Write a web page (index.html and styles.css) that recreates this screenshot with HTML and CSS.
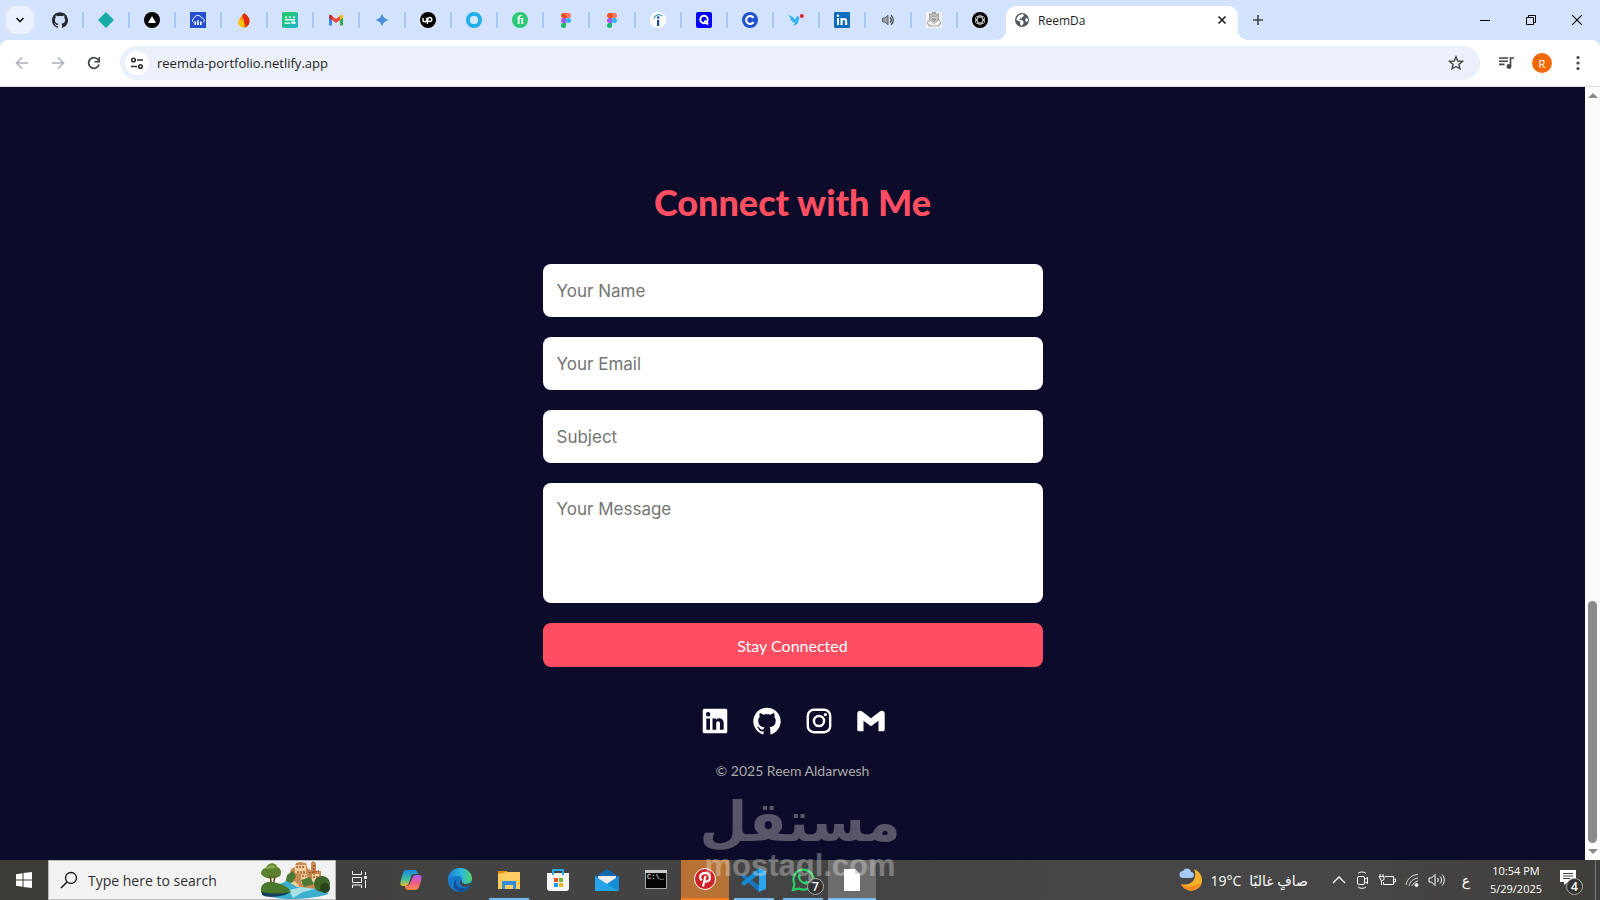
FILE: index.html
```html
<!DOCTYPE html>
<html lang="en">
<head>
    <meta charset="UTF-8">
    <meta name="viewport" content="width=device-width, initial-scale=1.0">
    <title>ReemDa</title>
    <link rel="stylesheet" href="styles.css">
</head>
<body>
    <!-- Tab strip -->
    <header class="tab-strip">
        <button class="tab-search" aria-label="Search tabs">
            <svg width="10" height="10" viewBox="0 0 10 10"><path d="M1.5 3 5 6.5 8.5 3" fill="none" stroke="#1f1f1f" stroke-width="1.700"/></svg>
        </button>
        <nav class="tabs">
            <button class="tab" aria-label="GitHub"><svg viewBox="0 0 24 24"><path fill="#24292f" d="M12 .297c-6.63 0-12 5.373-12 12 0 5.303 3.438 9.8 8.205 11.385.6.113.82-.258.82-.577 0-.285-.01-1.04-.015-2.04-3.338.724-4.042-1.61-4.042-1.61C4.422 18.07 3.633 17.7 3.633 17.7c-1.087-.744.084-.729.084-.729 1.205.084 1.838 1.236 1.838 1.236 1.07 1.835 2.809 1.305 3.495.998.108-.776.417-1.305.76-1.605-2.665-.3-5.466-1.332-5.466-5.93 0-1.31.465-2.38 1.235-3.22-.135-.303-.54-1.523.105-3.176 0 0 1.005-.322 3.3 1.23.96-.267 1.98-.399 3-.405 1.02.006 2.04.138 3 .405 2.28-1.552 3.285-1.23 3.285-1.23.645 1.653.24 2.873.12 3.176.765.84 1.23 1.91 1.23 3.22 0 4.61-2.805 5.625-5.475 5.92.42.36.81 1.096.81 2.22 0 1.606-.015 2.896-.015 3.286 0 .315.21.69.825.57C20.565 22.092 24 17.592 24 12.297c0-6.627-5.373-12-12-12"/></svg></button>
            <button class="tab" aria-label="Netlify"><svg viewBox="0 0 16 16"><path fill="#15ada7" d="M8 0l8 8-8 8-8-8z"/><path d="M4 7l8 3M7 3l4 9M5 11l7-5" stroke="#1a8f96" stroke-width=".6" stroke-dasharray="1 1"/></svg></button>
            <button class="tab" aria-label="Vercel"><svg viewBox="0 0 16 16"><circle cx="8" cy="8" r="8"/><path fill="#fff" d="M8 4l4 7H4z"/></svg></button>
            <button class="tab" aria-label="Cloudinary"><svg viewBox="0 0 16 16"><path fill="#2450d0" d="M0 0h16v16H0z"/><path d="M3.500 10.500A2.300 2.300 0 0 1 3.800 6.500C5 2.500 10.500 2.500 11.800 6.200 14.500 6.200 15 9.500 12.800 10.500" fill="none" stroke="#fff"/><path fill="#fff" d="M4.500 9.500h1.600V13H4.500zM7.200 8.300h1.600V13H7.200zM10 9.500h1.600V13H10z"/></svg></button>
            <button class="tab" aria-label="Firebase"><svg viewBox="0 0 16 16"><path fill="#dd2c00" d="M8 1c4 3 6 5 5.500 9A5.600 5.600 0 0 1 8 15.500z"/><path fill="#ff9100" d="M8 1C6 4 3 6 2.500 10A5.600 5.600 0 0 0 8 15.500c2-2 0-6-1-8 0-2 1-3 1-6.500z"/><path fill="#ffc400" d="M3.500 7c3 1 5 4 5 8.300C5 16 2 13 2.500 10z"/><path fill="#dd2c00" d="M7 1.500c-1 3-.5 5 1.500 7l2-3z"/></svg></button>
            <button class="tab" aria-label="Messages"><svg viewBox="0 0 16 16"><defs><linearGradient id="mint" x1="0" y1="0" x2="1" y2="1"><stop offset=".3" stop-color="#22c973"/><stop offset="1" stop-color="#1bb0dc"/></linearGradient></defs><rect width="16" height="16" rx="2" fill="url(#mint)"/><path fill="#fff" d="M3 4.500h2V6H3zM7 4.500h2V6H7zM11 4.500h2V6h-2zM3 7h10v1.500H3zM2.500 10.500h6v1.300h-6zM9.500 9.500h4v2.300h-4z"/></svg></button>
            <button class="tab" aria-label="Gmail"><svg viewBox="0 0 16 16"><path fill="#4285f4" d="M1 5v8.500h3V7z"/><path fill="#34a853" d="M12 7v6.500h3V5z"/><path fill="#ea4335" d="M4 4l4 3 4-3v4l-4 3-4-3z"/><path fill="#c5221f" d="M1 4.500C1 2.500 3 2 4 3.500V8L1 5.800z"/><path fill="#fbbc04" d="M15 4.500C15 2.500 13 2 12 3.500V8l3-2.200z"/></svg></button>
            <button class="tab" aria-label="Gemini"><svg viewBox="0 0 16 16"><path fill="#4a8ddb" d="M8 1.500c1 3.700 2.800 5.500 6.500 6.500-3.700 1-5.500 2.800-6.500 6.500C7 10.800 5.200 9 1.500 8 5.200 7 7 5.200 8 1.500z"/></svg></button>
            <button class="tab" aria-label="Upwork"><svg viewBox="0 0 16 16"><circle cx="8" cy="8" r="8"/><path d="M3 6v2a1.800 1.800 0 0 0 3.600 0V6c.6 2 1.600 3.500 3.200 3.500a2 2 0 1 0-2-2L7.300 12" fill="none" stroke="#fff" stroke-width="1.400"/></svg></button>
            <button class="tab" aria-label="Ring"><svg viewBox="0 0 16 16"><circle cx="8" cy="8" r="6" fill="none" stroke="#22aee8" stroke-width="4"/><circle cx="8" cy="8" r="4" fill="#cfeafd"/></svg></button>
            <button class="tab" aria-label="Fiverr"><svg viewBox="0 0 16 16"><circle cx="8" cy="8" r="8" fill="#2bc878"/><text x="8" y="12" class="icon-letter" text-anchor="middle" font-size="11">fi</text></svg></button>
            <button class="tab" aria-label="Figma"><svg viewBox="0 0 16 16"><path fill="#f24e1e" d="M8 1H5.500a2.500 2.500 0 0 0 0 5H8z"/><path fill="#ff7262" d="M8 1h2.500a2.500 2.500 0 0 1 0 5H8z"/><path fill="#a259ff" d="M8 6H5.500a2.500 2.500 0 0 0 0 5H8z"/><circle cx="10.500" cy="8.500" r="2.500" fill="#28b8f5"/><path fill="#18b56b" d="M8 11H5.500A2.500 2.500 0 1 0 8 13.500z"/></svg></button>
            <button class="tab" aria-label="Figma file"><svg viewBox="0 0 16 16"><path fill="#f24e1e" d="M8 1H5.500a2.500 2.500 0 0 0 0 5H8z"/><path fill="#ff7262" d="M8 1h2.500a2.500 2.500 0 0 1 0 5H8z"/><path fill="#a259ff" d="M8 6H5.500a2.500 2.500 0 0 0 0 5H8z"/><circle cx="10.500" cy="8.500" r="2.500" fill="#28b8f5"/><path fill="#18b56b" d="M8 11H5.500A2.500 2.500 0 1 0 8 13.500z"/></svg></button>
            <button class="tab" aria-label="Indeed"><svg viewBox="0 0 16 16"><circle cx="8" cy="8" r="8" fill="#fff"/><path fill="#1c4a99" d="M7 8h2.200v6H7z"/><circle cx="8.200" cy="5.500" r="1.300" fill="#1c4a99"/><path d="M4 6.500C5 2.500 9 1.500 12 4" fill="none" stroke="#4d9ab8" stroke-width="1.200"/></svg></button>
            <button class="tab" aria-label="Q"><svg viewBox="0 0 16 16"><rect width="16" height="16" rx="2" fill="#0000fa"/><circle cx="8" cy="7.500" r="3.700" fill="none" stroke="#fff" stroke-width="2"/><path d="M8.500 8.500l3.500 4" stroke="#fff" stroke-width="2"/></svg></button>
            <button class="tab" aria-label="Coursera"><svg viewBox="0 0 16 16"><circle cx="8" cy="8" r="8" fill="#1f53cc"/><path d="M11.500 5.800a4 4 0 1 0 0 4.400" fill="none" stroke="#fff" stroke-width="2.200"/></svg></button>
            <button class="tab" aria-label="Bird"><svg viewBox="0 0 16 16"><path fill="#2fb4ee" d="M0 3l5 2 2 2.500L9 4l2.500 1-1 4c-.5 3-2.500 4-5.500 5l2-3C4 10 2.500 8 2.500 6z"/><circle cx="13.800" cy="4" r="2" fill="#e3242b"/></svg></button>
            <button class="tab" aria-label="LinkedIn"><svg viewBox="0 0 16 16"><rect width="16" height="16" rx="1" fill="#0b6cc0"/><path fill="#fff" d="M3 6h2v7H3zM6.500 6h2v1c1-1.500 4.700-1.500 4.700 2v4h-2.100V9.500c0-2.300-2.500-2-2.500 0V13h-2.100z"/><circle cx="4" cy="3.800" r="1.200" fill="#fff"/></svg></button>
            <button class="tab" aria-label="Audio playing"><svg viewBox="0 0 16 16"><path d="M2.500 6v4h2.300L8 12.800V3.200L4.800 6z" fill="#9aa0a6" stroke="#5f6368"/><path d="M10 5.500c1.500 1.500 1.500 3.500 0 5M11 3.200c3 2.800 3 6.800 0 9.600" fill="none" stroke="#444746" stroke-width="1.300"/></svg></button>
            <button class="tab" aria-label="University"><svg viewBox="0 0 16 16"><path fill="#f2f2f2" d="M0 0h16v16H0z"/><path fill="#a3a3a3" d="M3 1l3 1V0h4v2l3-1v7l-5 4-5-4z"/><path d="M5 3v5l3 3 3-3V3M6 3h4M6 5.500h4" fill="none" stroke="#d8d8d8"/><path d="M1 11l4 3h6l4-3M3 8l-2 3 3 4M13 8l2 3-3 4" fill="none" stroke="#aaa"/></svg></button>
            <button class="tab" aria-label="ChatGPT"><svg viewBox="0 0 16 16"><circle cx="8" cy="8" r="8"/><g fill="none" stroke="#ddd" stroke-width=".8"><ellipse cx="8" cy="8" rx="2.700" ry="5"/><ellipse cx="8" cy="8" rx="2.700" ry="5" transform="rotate(60 8 8)"/><ellipse cx="8" cy="8" rx="2.700" ry="5" transform="rotate(120 8 8)"/></g></svg></button>
        </nav>
        <div class="active-tab">
            <svg width="16" height="16" viewBox="0 0 16 16"><circle cx="8" cy="8" r="7" fill="#55585c"/><path fill="#fff" d="M6.500 2.600L9 2l1 2-2 1v1.500H6L5 8h3l1.500 1.500v2L7.500 14 6 12l.5-2L2.500 8c0-2 1.500-4.500 4-5.400zM12 6l2 1v2l-1.500 1L11 8.500z"/></svg>
            <span class="active-title">ReemDa</span>
            <button class="icon-btn" aria-label="Close tab"><svg width="10" height="10" viewBox="0 0 10 10"><path d="M1.500 1.500l7 7M8.500 1.500l-7 7" stroke="#1f1f1f" stroke-width="1.600"/></svg></button>
        </div>
        <button class="new-tab" aria-label="New tab"><svg width="12" height="12" viewBox="0 0 12 12"><path d="M6 1v10M1 6h10" stroke="#444746" stroke-width="1.600"/></svg></button>
        <div class="window-controls">
            <button aria-label="Minimize"><svg width="10" height="10" viewBox="0 0 10 10"><path d="M0 5.500h10" stroke="#000"/></svg></button>
            <button aria-label="Restore"><svg width="10" height="10" viewBox="0 0 10 10"><path d="M.5 2.500h7v7h-7zM2.500 2.500v-2h7v7h-2" fill="none" stroke="#000"/></svg></button>
            <button aria-label="Close"><svg width="10" height="10" viewBox="0 0 10 10"><path d="M0 0l10 10M10 0L0 10" stroke="#000" stroke-width="1.100"/></svg></button>
        </div>
    </header>

    <!-- Toolbar -->
    <div class="toolbar-wrap">
        <div class="toolbar">
            <div class="nav-buttons">
                <button class="icon-btn" aria-label="Back" disabled><svg width="14" height="14" viewBox="0 0 14 14"><path d="M13 7H2M7 1.500L1.500 7 7 12.500" fill="none" stroke="#b0b3b8" stroke-width="1.600"/></svg></button>
                <button class="icon-btn" aria-label="Forward" disabled><svg width="14" height="14" viewBox="0 0 14 14"><path d="M1 7h11M7 1.500L12.500 7 7 12.500" fill="none" stroke="#b0b3b8" stroke-width="1.600"/></svg></button>
                <button class="icon-btn" aria-label="Reload"><svg width="14" height="14" viewBox="0 0 14 14"><path d="M12 8.500A5.300 5.300 0 1 1 11.500 4.300" fill="none" stroke="#3c4043" stroke-width="1.700"/><path fill="#3c4043" d="M13 1v5.500H7.500V5h4V1z"/></svg></button>
            </div>
            <div class="address-bar">
                <button class="site-info" aria-label="View site information"><svg width="14" height="14" viewBox="0 0 14 14" fill="none" stroke="#303134" stroke-width="1.600"><circle cx="3.500" cy="4" r="1.800"/><path d="M7 4h6M1 10.500h6"/><circle cx="10.500" cy="10.500" r="1.800"/></svg></button>
                <input class="url" type="text" value="reemda-portfolio.netlify.app" aria-label="Address">
                <button class="icon-btn" aria-label="Bookmark this tab"><svg width="16" height="16" viewBox="0 0 16 16"><path d="M8 1.800l1.800 4.200 4.700.4-3.600 3 1.100 4.500L8 11.500l-4 2.400 1.100-4.500-3.600-3 4.700-.4z" fill="none" stroke="#444746" stroke-width="1.400"/></svg></button>
            </div>
            <div class="toolbar-actions">
                <button class="icon-btn" aria-label="Media controls"><svg width="16" height="14" viewBox="0 0 16 14"><path d="M1 2h9M1 5.200h9M1 8.400h5.500" stroke="#444746" stroke-width="1.600"/><path d="M12.500 10V2H16" fill="none" stroke="#444746" stroke-width="1.700"/><circle cx="11" cy="10.500" r="2.400" fill="#444746"/></svg></button>
                <button class="avatar" aria-label="Profile">R</button>
                <button class="icon-btn" aria-label="Menu"><svg width="4" height="16" viewBox="0 0 4 16" fill="#444746"><circle cx="2" cy="2.500" r="1.600"/><circle cx="2" cy="8" r="1.600"/><circle cx="2" cy="13.500" r="1.600"/></svg></button>
            </div>
        </div>
    </div>

    <!-- Page -->
    <div class="viewport">
        <main class="contact">
            <h2>Connect with Me</h2>
            <form class="contact-form">
                <input type="text" placeholder="Your Name" aria-label="Your Name">
                <input type="email" placeholder="Your Email" aria-label="Your Email">
                <input type="text" placeholder="Subject" aria-label="Subject">
                <textarea placeholder="Your Message" aria-label="Your Message"></textarea>
                <button type="button">Stay Connected</button>
            </form>
            <div class="social">
                <a href="#" aria-label="LinkedIn"><svg viewBox="0 0 24 24"><path d="M20 2.800a1.200 1.200 0 0 1 1.200 1.200v16a1.200 1.200 0 0 1-1.200 1.200H4A1.200 1.200 0 0 1 2.800 20V4A1.200 1.200 0 0 1 4 2.800h16m-1.500 15.700v-5.300a3.260 3.260 0 0 0-3.260-3.260c-.85 0-1.840.52-2.320 1.300v-1.110h-2.790v8.370h2.790v-4.930c0-.77.62-1.400 1.390-1.400a1.400 1.400 0 0 1 1.400 1.400v4.930h2.790M6.880 8.560a1.680 1.680 0 0 0 1.680-1.680c0-.93-.75-1.690-1.680-1.690a1.690 1.690 0 0 0-1.690 1.690c0 .93.76 1.680 1.690 1.680m1.390 9.940v-8.370H5.500v8.370h2.770z"/></svg></a>
                <a href="#" aria-label="GitHub"><svg viewBox="-2 -2 28 28"><path d="M12 .297c-6.63 0-12 5.373-12 12 0 5.303 3.438 9.800 8.205 11.385.6.113.82-.258.82-.577 0-.285-.01-1.040-.015-2.040-3.338.724-4.042-1.610-4.042-1.610C4.422 18.070 3.633 17.700 3.633 17.700c-1.087-.744.084-.729.084-.729 1.205.084 1.838 1.236 1.838 1.236 1.070 1.835 2.809 1.305 3.495.998.108-.776.417-1.305.76-1.605-2.665-.3-5.466-1.332-5.466-5.930 0-1.310.465-2.380 1.235-3.220-.135-.303-.54-1.523.105-3.176 0 0 1.005-.322 3.300 1.230.96-.267 1.980-.399 3-.405 1.020.006 2.040.138 3 .405 2.280-1.552 3.285-1.230 3.285-1.230.645 1.653.24 2.873.12 3.176.765.84 1.230 1.910 1.230 3.220 0 4.610-2.805 5.625-5.475 5.920.42.36.81 1.096.81 2.220 0 1.606-.015 2.896-.015 3.286 0 .315.21.69.825.57C20.565 22.092 24 17.592 24 12.297c0-6.627-5.373-12-12-12"/></svg></a>
                <a href="#" aria-label="Instagram"><svg viewBox="0 0 24 24" fill="none"><rect x="3.600" y="3.600" width="16.800" height="16.800" rx="4.500" fill="none" stroke="#fff" stroke-width="1.800"/><circle cx="12" cy="12" r="3.800" fill="none" stroke="#fff" stroke-width="1.800"/><circle cx="16.800" cy="7.200" r="1.200"/></svg></a>
                <a href="#" aria-label="Gmail"><svg viewBox="-2 -2 28 28"><path d="M24 5.457v13.909c0 .904-.732 1.636-1.636 1.636h-3.819V11.730L12 16.640l-6.545-4.910v9.273H1.636A1.636 1.636 0 0 1 0 19.366V5.457c0-2.023 2.309-3.178 3.927-1.964L5.455 4.640 12 9.548l6.545-4.910 1.528-1.145C21.690 2.280 24 3.434 24 5.457z"/></svg></a>
            </div>
            <p class="copyright">© 2025 Reem Aldarwesh</p>
        </main>
        <div class="scrollbar">
            <span class="arrow-up"></span>
            <span class="track"></span>
            <span class="thumb"></span>
            <span class="arrow-down"></span>
        </div>
    </div>

    <!-- Taskbar -->
    <footer class="taskbar">
        <button class="start" aria-label="Start"><svg width="16" height="16" viewBox="0 0 16 16"><path fill="#fff" d="M0 2.200L6.500 1.300V7.500H0zM7.500 1.100L16 0v7.500H7.500zM0 8.500h6.500v6.200L0 13.800zM7.500 8.500H16V16l-8.500-1.100z"/></svg></button>
        <div class="search">
            <svg width="18" height="18" viewBox="0 0 18 18"><circle cx="11" cy="7" r="5.500" fill="none" stroke="#111" stroke-width="1.300"/><path d="M7 11l-6 6" stroke="#111" stroke-width="1.400"/></svg>
            <input type="text" placeholder="Type here to search" aria-label="Search">
            <svg width="70" height="38" viewBox="0 0 70 38">
                <path fill="#c98b52" d="M22 25l6-10 2-7 4-2 1-4 4-1 6 1 2 6 3 1V2l2-2 3 2v8h5v12l8 6-15 3z"/>
                <path fill="#f0cf9a" d="M34 4h11v8H34zM40 13h6v9h-6zM51 13h7v9h-7zM24 24l9-4 6 5-10 4z"/>
                <path d="M35 6h9M36 11h8M48 12l10-2M53 4v10M52 16h5M41 15h4" stroke="#a35331" stroke-width="1.500" stroke-dasharray="2 1"/>
                <path fill="#4c7a35" d="M26 14l6-4 3 5-3 6-8 3zM40 19l9-3 4 7-10 3z"/>
                <path fill="#3cafd0" d="M16 24l10-4 10 6 20 2 12 4c-4 5-50 9-58 3z"/>
                <path fill="#a9e0e4" d="M28 29l12-3 14 2-12 3-10 6z"/>
                <path fill="#5b812f" d="M0 13c0-4 3-6 5-6 2-6 10-6 11-1 4 1 5 6 3 9-4 3-15 4-19-2z"/>
                <path fill="#8caa48" d="M5 8c2-5 9-5 10-1z"/>
                <path d="M9 15l2 10M14 15l-2 10" stroke="#6e4426" stroke-width="1.500"/>
                <path fill="#49782a" d="M0 28c0-5 6-8 11-7 8 1 16 4 19 10-8 3-23 4-30 1z"/>
                <path fill="#173f60" d="M1 31c10 2 20 2 28 0-3 4-22 7-28 3z"/>
                <circle cx="61" cy="23" r="8" fill="#3f6428"/><circle cx="64" cy="27" r="5" fill="#26441d"/>
            </svg>
        </div>
        <button class="task-item" aria-label="Task view"><svg width="18" height="18" viewBox="0 0 18 18" fill="none" stroke="#f5f5f5"><path d="M1.500 0v3.500h9V0M1.500 6.500h9v5h-9zM1.500 17v-3h9v3M14.500 1v3M14.500 9v8"/><path d="M13.500 5.500h2v2h-2z" fill="#f5f5f5"/></svg></button>
        <div class="apps">
            <button class="task-item" aria-label="Copilot"><svg width="24" height="24" viewBox="0 0 24 24"><defs><linearGradient id="cop1" x1="0" y1="0" x2="0" y2="1"><stop offset="0" stop-color="#1689e8"/><stop offset=".6" stop-color="#42c09b"/><stop offset="1" stop-color="#f0bc24"/></linearGradient><linearGradient id="cop2" x1="0" y1="0" x2="0" y2="1"><stop offset="0" stop-color="#a95cf0"/><stop offset=".5" stop-color="#f05b92"/><stop offset="1" stop-color="#ff8a42"/></linearGradient></defs><path fill="url(#cop1)" d="M7 2h9c2 0 2 2 3 4h-4c-2 0-3 1-3 3l-2 6c-1 2-2 3-4 3H4c-3 0-3-3-2-6l2-7c1-2 1-3 3-3z"/><path fill="url(#cop2)" d="M18 7h2c3 0 3 3 2 6l-2 6c-1 2-2 3-4 3H9c-2 0-3-2-3-4h1c2 0 3-1 4-3l3-6c1-2 2-2 4-2z"/></svg></button>
            <button class="task-item" aria-label="Edge"><svg width="24" height="24" viewBox="0 0 24 24"><defs><linearGradient id="edge" x1="0" y1="0" x2="1" y2="0"><stop offset="0" stop-color="#1d7fd5"/><stop offset=".55" stop-color="#2cb5dc"/><stop offset="1" stop-color="#53d46a"/></linearGradient></defs><circle cx="12" cy="12" r="12" fill="#1679cb"/><path fill="url(#edge)" d="M0 12C0 5 5 0 12 0s12 5 12 10c0 4-3 6-6 6-3 0-5-1-4-3 1-3-1-5-4-5-5 0-9 2-10 4z"/><path fill="#15519b" d="M9 10c-3 5 1 10 6 10 3 0 5-1 7-2-2 4-6 6-10 6-6-1-9-9-3-14z"/><path fill="#444" d="M14 13c-1 3 4 4 8 2l2 1-2 2c-5 2-11 0-10-4 0-1 1-2 2-1z"/></svg></button>
            <button class="task-item running" aria-label="File Explorer"><svg width="24" height="24" viewBox="0 0 24 24"><path fill="#e98e16" d="M1 3h9l1 2v4H1z"/><path fill="#ffcd61" d="M1 6l10-2h12v17H1z"/><path fill="#348fdb" d="M5 13h14v8h-3v-4H8v4H5z"/></svg></button>
            <button class="task-item" aria-label="Microsoft Store"><svg width="24" height="24" viewBox="0 0 24 24"><path d="M7 7V2h10v5" fill="none" stroke="#29a9e8" stroke-width="2"/><path fill="#f7f7f7" d="M1 5h22v15a3 3 0 0 1-3 3H4a3 3 0 0 1-3-3z"/><path fill="#29a9e8" d="M6 5h2v2H6zM16 5h2v2h-2z"/><path fill="#e74c28" d="M8 10h4v4H8z"/><path fill="#7cb532" d="M13 10h4v4h-4z"/><path fill="#1b9be0" d="M8 15h4v4H8z"/><path fill="#f5b51c" d="M13 15h4v4h-4z"/></svg></button>
            <button class="task-item" aria-label="Mail"><svg width="24" height="24" viewBox="0 0 24 24"><path fill="#1166b0" d="M0 9l12-8 12 8v6H0z"/><path fill="#eee" d="M3 8h18v6l-9 4-9-4z"/><path fill="#25a4e9" d="M0 8l12 8 12-8v15H0z"/><path fill="#168bd6" d="M24 8v15L10 14.700l2 1.300z"/></svg></button>
            <button class="task-item" aria-label="Command Prompt"><svg width="24" height="24" viewBox="0 0 24 24"><path fill="#050505" stroke="#aaa" d="M1.500 2.500h21v18h-21z"/><path fill="#ccc" d="M1 2h22v3H1z"/><text x="3" y="11" font-family="Liberation Mono" font-size="7" fill="#fff">C:\_</text></svg></button>
            <button class="task-item attention" aria-label="Pinterest"><svg width="22" height="22" viewBox="0 0 22 22"><circle cx="11" cy="11" r="10.500" fill="#cf2229" stroke="#fff"/><path d="M9 18.500l2.500-10.500M7.500 12.500C4 7.500 8 4.800 11.500 4.800c5.500.2 5.500 8 1.500 8.700-1 .2-2-.2-2.500-1" fill="none" stroke="#fff" stroke-width="2.200"/></svg></button>
            <button class="task-item running" aria-label="Visual Studio Code"><svg width="24" height="24" viewBox="0 0 24 24"><path fill="#1976be" d="M0 8l2-2 18 14-3 4L0 9z"/><path fill="#1688d2" d="M0 16l2 2L20 4l-3-4L0 14z"/><path fill="#2aa5ec" d="M17 0l7 3v18l-7 3z"/></svg></button>
            <button class="task-item running" aria-label="WhatsApp"><svg width="24" height="24" viewBox="0 0 24 24"><path d="M2 22l1.500-6A10 10 0 1 1 8 20.500z" fill="none" stroke="#2bd366" stroke-width="2.200"/><path fill="#2bd366" d="M7 7c1-2 2-1 3 1l-1 2c1 2 3 4 5 4l1.500-1.500 2.500 1.500c0 2-2 3-4 2.500C10 15.500 6 11 7 7z"/></svg><span class="badge">7</span></button>
            <button class="task-item running current" aria-label="Document"><svg width="16" height="22" viewBox="0 0 16 22"><path fill="#fff" d="M0 0h11l5 5v17H0z"/><path fill="#ccc" d="M11 0l5 5h-5z"/></svg></button>
        </div>
        <div class="tray">
            <button class="weather">
                <svg width="24" height="24" viewBox="0 0 24 24"><path fill="#f5b02d" d="M15 1c10 4 11 17 1 21-6 2-12-1-14-6 11 3 17-6 13-15z"/><path fill="#f58a20" d="M22 15c-4 9-15 10-20 1 7 4 14 3 20-1z"/><path fill="#a5c8f7" d="M4 10a3.500 3.500 0 0 1 0-7c2-4 8-3 8 1 4 0 4 6 0 6z"/></svg>
                <span>19°C</span>
                <span dir="rtl" lang="ar">صافٍ غالبًا</span>
            </button>
            <div class="tray-icons">
                <svg width="14" height="14" viewBox="0 0 14 14"><path d="M1 10l6-6 6 6" fill="none" stroke="#fff" stroke-width="1.300"/></svg>
                <svg width="14" height="18" viewBox="0 0 14 18" fill="none" stroke="#fff"><rect x="2.500" y="5.500" width="7" height="8" rx="1.500"/><path d="M9.500 8.500l3-2v6l-3-2M3 2.500c2-2 6-2 8 0M3 15.800c2 2 6 2 8 0"/></svg>
                <svg width="18" height="14" viewBox="0 0 18 14" fill="none" stroke="#fff"><path d="M7 3.500h8.500v8H5.500V9M15.500 6h2v3h-2M2 1v2M5 1v2M1 3.500h5v3L3.500 8zM3.500 8v4"/></svg>
                <svg width="14" height="14" viewBox="0 0 14 14" fill="none" stroke="#fff"><path d="M1 12C2 6 7 1.500 13 1.500M4 13c1-4 4-7.500 9-8M7 13c1-2.500 3-4.500 6-5" opacity=".8"/><circle cx="11.500" cy="12" r="1.500" fill="#fff"/></svg>
                <svg width="18" height="14" viewBox="0 0 18 14" fill="none" stroke="#fff"><path d="M1 5v4h2.500L7 12.500v-11L3.500 5zM9.500 5c1 1 1 3 0 4M12 3.500c2 2 2 5 0 7M14 1.500c3 3 3 8 0 11"/></svg>
            </div>
            <span class="language" lang="ar">ع</span>
            <div class="clock"><span>10:54 PM</span><span>5/29/2025</span></div>
            <button class="notifications" aria-label="Notifications"><svg width="16" height="16" viewBox="0 0 16 16"><path fill="#fff" d="M0 0h16v12H8l-4 3v-3H0z"/><path d="M3 3.500h10M3 6h10M3 8.500h7" stroke="#444"/></svg><span class="badge">4</span></button>
        </div>
    </footer>

    <div class="watermark" aria-hidden="true">
        <span class="watermark-ar" lang="ar" dir="rtl">مستقل</span>
        <span class="watermark-en">mostaql.com</span>
    </div>
</body>
</html>
```
FILE: styles.css
```css
* {
    box-sizing: border-box;
}

body {
    margin: 0;
    height: 100vh;
    display: flex;
    flex-direction: column;
    overflow: hidden;
    position: relative;
    font-family: "Open Sans", "DejaVu Sans", sans-serif;
    background: #0c0b29;
}

button {
    border: none;
    padding: 0;
    background: none;
    color: inherit;
    font-family: inherit;
    display: flex;
    align-items: center;
    justify-content: center;
}

svg {
    flex-shrink: 0;
    display: block;
}

/* Tab strip */
.tab-strip {
    height: 40px;
    display: flex;
    align-items: center;
    background: #d3e3fd;
    padding-left: 6px;
    flex-shrink: 0;
}

.tab-search {
    width: 28px;
    height: 28px;
    border-radius: 10px;
    background: #ebf2fe;
    margin-right: 4px;
}

.tabs {
    display: flex;
}

.tab {
    width: 46px;
    height: 16px;
    border-right: 2px solid #a8c7fa;
}

.tab:last-child {
    border-color: transparent;
}

.tab svg {
    width: 16px;
    height: 16px;
}

.icon-letter {
    font-family: Lato, sans-serif;
    font-weight: 900;
    fill: #fff;
}

.active-tab {
    position: relative;
    align-self: flex-end;
    width: 232px;
    height: 34px;
    margin-left: 2px;
    padding: 0 8px 6px;
    border-radius: 10px 10px 0 0;
    background: #fff;
    display: flex;
    align-items: center;
    gap: 8px;
}

/* Flared bottom corners */
.active-tab::before,
.active-tab::after {
    content: "";
    position: absolute;
    bottom: 0;
    width: 10px;
    height: 10px;
}

.active-tab::before {
    left: -10px;
    background: radial-gradient(circle at 0 0, transparent 10px, #fff 10px);
}

.active-tab::after {
    right: -10px;
    background: radial-gradient(circle at 100% 0, transparent 10px, #fff 10px);
}

.active-title {
    flex: 1;
    font-size: 12px;
    color: #1f1f1f;
}

.icon-btn {
    min-width: 16px;
    height: 16px;
}

.new-tab {
    width: 28px;
    height: 28px;
    margin-left: 6px;
}

.window-controls {
    display: flex;
    margin-left: auto;
}

.window-controls button {
    width: 46px;
    height: 40px;
}

/* Toolbar */
.toolbar-wrap {
    background: #d3e3fd;
    flex-shrink: 0;
}

.toolbar {
    height: 47px;
    display: flex;
    align-items: center;
    padding: 0 14px;
    background: #fff;
    border-radius: 8px 8px 0 0;
    border-bottom: 1px solid #dfe1e5;
}

.nav-buttons {
    display: flex;
    gap: 20px;
    margin-right: 18px;
}

.address-bar {
    flex: 1;
    height: 34px;
    display: flex;
    align-items: center;
    padding: 0 16px 0 5px;
    border-radius: 17px;
    background: #ecf0fa;
}

.site-info {
    width: 24px;
    height: 24px;
    border-radius: 50%;
    background: #fff;
}

.url {
    flex: 1;
    margin-left: 8px;
    padding: 0;
    border: none;
    background: none;
    font-family: inherit;
    font-size: 13px;
    color: #1f1f1f;
}

.toolbar-actions {
    display: flex;
    align-items: center;
    gap: 18px;
    padding-left: 18px;
}

.avatar {
    width: 20px;
    height: 20px;
    border-radius: 50%;
    background: #f06a0a;
    color: #fff;
    font-size: 11px;
}

/* Page */
.viewport {
    flex: 1;
    min-height: 0;
    display: flex;
}

.contact {
    flex: 1;
    display: flex;
    flex-direction: column;
    align-items: center;
    padding: 90px 20px 0;
    overflow: hidden;
    font-family: Lato, sans-serif;
}

.contact h2 {
    margin: 0 0 37px;
    font-size: 36px;
    line-height: 50px;
    font-weight: 900;
    color: #ff4d61;
}

.contact-form {
    width: 100%;
    max-width: 500px;
    display: flex;
    flex-direction: column;
    gap: 20px;
}

.contact-form input,
.contact-form textarea {
    height: 53px;
    padding: 14px;
    border: none;
    border-radius: 8px;
    background: #fff;
    font-family: Inter, sans-serif;
    font-size: 17px;
    line-height: 24px;
    color: #333;
    resize: none;
}

.contact-form textarea {
    height: 120px;
}

.contact-form ::placeholder {
    color: #757575;
}

.contact-form button {
    height: 44px;
    border-radius: 8px;
    background: #ff4d61;
    color: #fff;
    font-size: 16px;
}

.social {
    display: flex;
    gap: 20px;
    margin-top: 38px;
}

.social svg {
    width: 32px;
    height: 32px;
    fill: #fff;
}

.copyright {
    margin: 24px 0 0;
    font-size: 14px;
    line-height: 20px;
    color: #aaa;
}

.scrollbar {
    width: 15px;
    padding: 6px 3px;
    display: flex;
    flex-direction: column;
    align-items: center;
    background: #fcfcfc;
}

.arrow-up,
.arrow-down {
    border: 5px solid transparent;
}

.arrow-up {
    border-top: none;
    border-bottom-color: #8b8b8b;
}

.arrow-down {
    border-bottom: none;
    border-top-color: #8b8b8b;
    margin-top: 6px;
}

.track {
    flex: 502;
}

.thumb {
    flex: 241;
    width: 9px;
    border-radius: 5px;
    background: #8b8b8b;
}

/* Taskbar */
.taskbar {
    height: 40px;
    display: flex;
    flex-shrink: 0;
    background: linear-gradient(to right, #3d3b35, #434343 30%, #464646 85%, #403e3a);
    color: #fff;
}

.start {
    width: 48px;
}

.search {
    width: 288px;
    display: flex;
    align-items: center;
    padding: 0 4px 0 11px;
    background: #f2f2f2;
    border: 1px solid #b8b8b8;
}

.search input {
    flex: 1;
    min-width: 0;
    padding: 0;
    margin-left: 10px;
    border: none;
    background: none;
    font-family: inherit;
    font-size: 14px;
}

.search input::placeholder {
    color: #303030;
}

.task-item {
    position: relative;
    width: 48px;
    height: 40px;
}

.apps {
    display: flex;
    gap: 1px;
    margin-left: 3px;
}

.running::after {
    content: "";
    position: absolute;
    left: 4px;
    right: 4px;
    bottom: 0;
    height: 2px;
    background: #76b9ed;
}

.current {
    background: #6d6d6d;
}

.current::after {
    left: 0;
    right: 0;
}

.attention {
    background: #b87236;
    border-bottom: 2px solid #f57c1a;
}

.badge {
    position: absolute;
    right: 3px;
    bottom: 5px;
    width: 17px;
    height: 17px;
    border: 1px solid #aaa;
    border-radius: 50%;
    background: #333;
    font-size: 12px;
    font-weight: 600;
    line-height: 15px;
    text-align: center;
}

.tray {
    margin-left: auto;
    display: flex;
    align-items: center;
}

.weather {
    gap: 8px;
    font-size: 14px;
    margin-right: 24px;
}

.tray-icons {
    display: flex;
    align-items: center;
    gap: 9px;
}

.language {
    width: 20px;
    margin-left: 10px;
    font-size: 14px;
    text-align: center;
}

.clock {
    display: flex;
    flex-direction: column;
    width: 80px;
    font-size: 11px;
    line-height: 18px;
    text-align: center;
}

.notifications {
    position: relative;
    width: 40px;
    height: 40px;
    padding: 0 16px 4px 0;
    border-right: 1px solid #777;
    margin-right: 4px;
}

.notifications .badge {
    right: 12px;
}

/* Watermark over the page and taskbar */
.watermark {
    position: absolute;
    left: 50%;
    bottom: 16px;
    transform: translateX(-50%);
    display: flex;
    flex-direction: column;
    align-items: center;
    font-weight: 700;
    color: #fff;
    opacity: 0.3;
    pointer-events: none;
}

.watermark-ar {
    font-family: "DejaVu Sans", sans-serif;
    font-size: 55px;
    line-height: 52px;
}

.watermark-en {
    font-family: "Liberation Sans", sans-serif;
    font-size: 31px;
    line-height: 36px;
}
```
